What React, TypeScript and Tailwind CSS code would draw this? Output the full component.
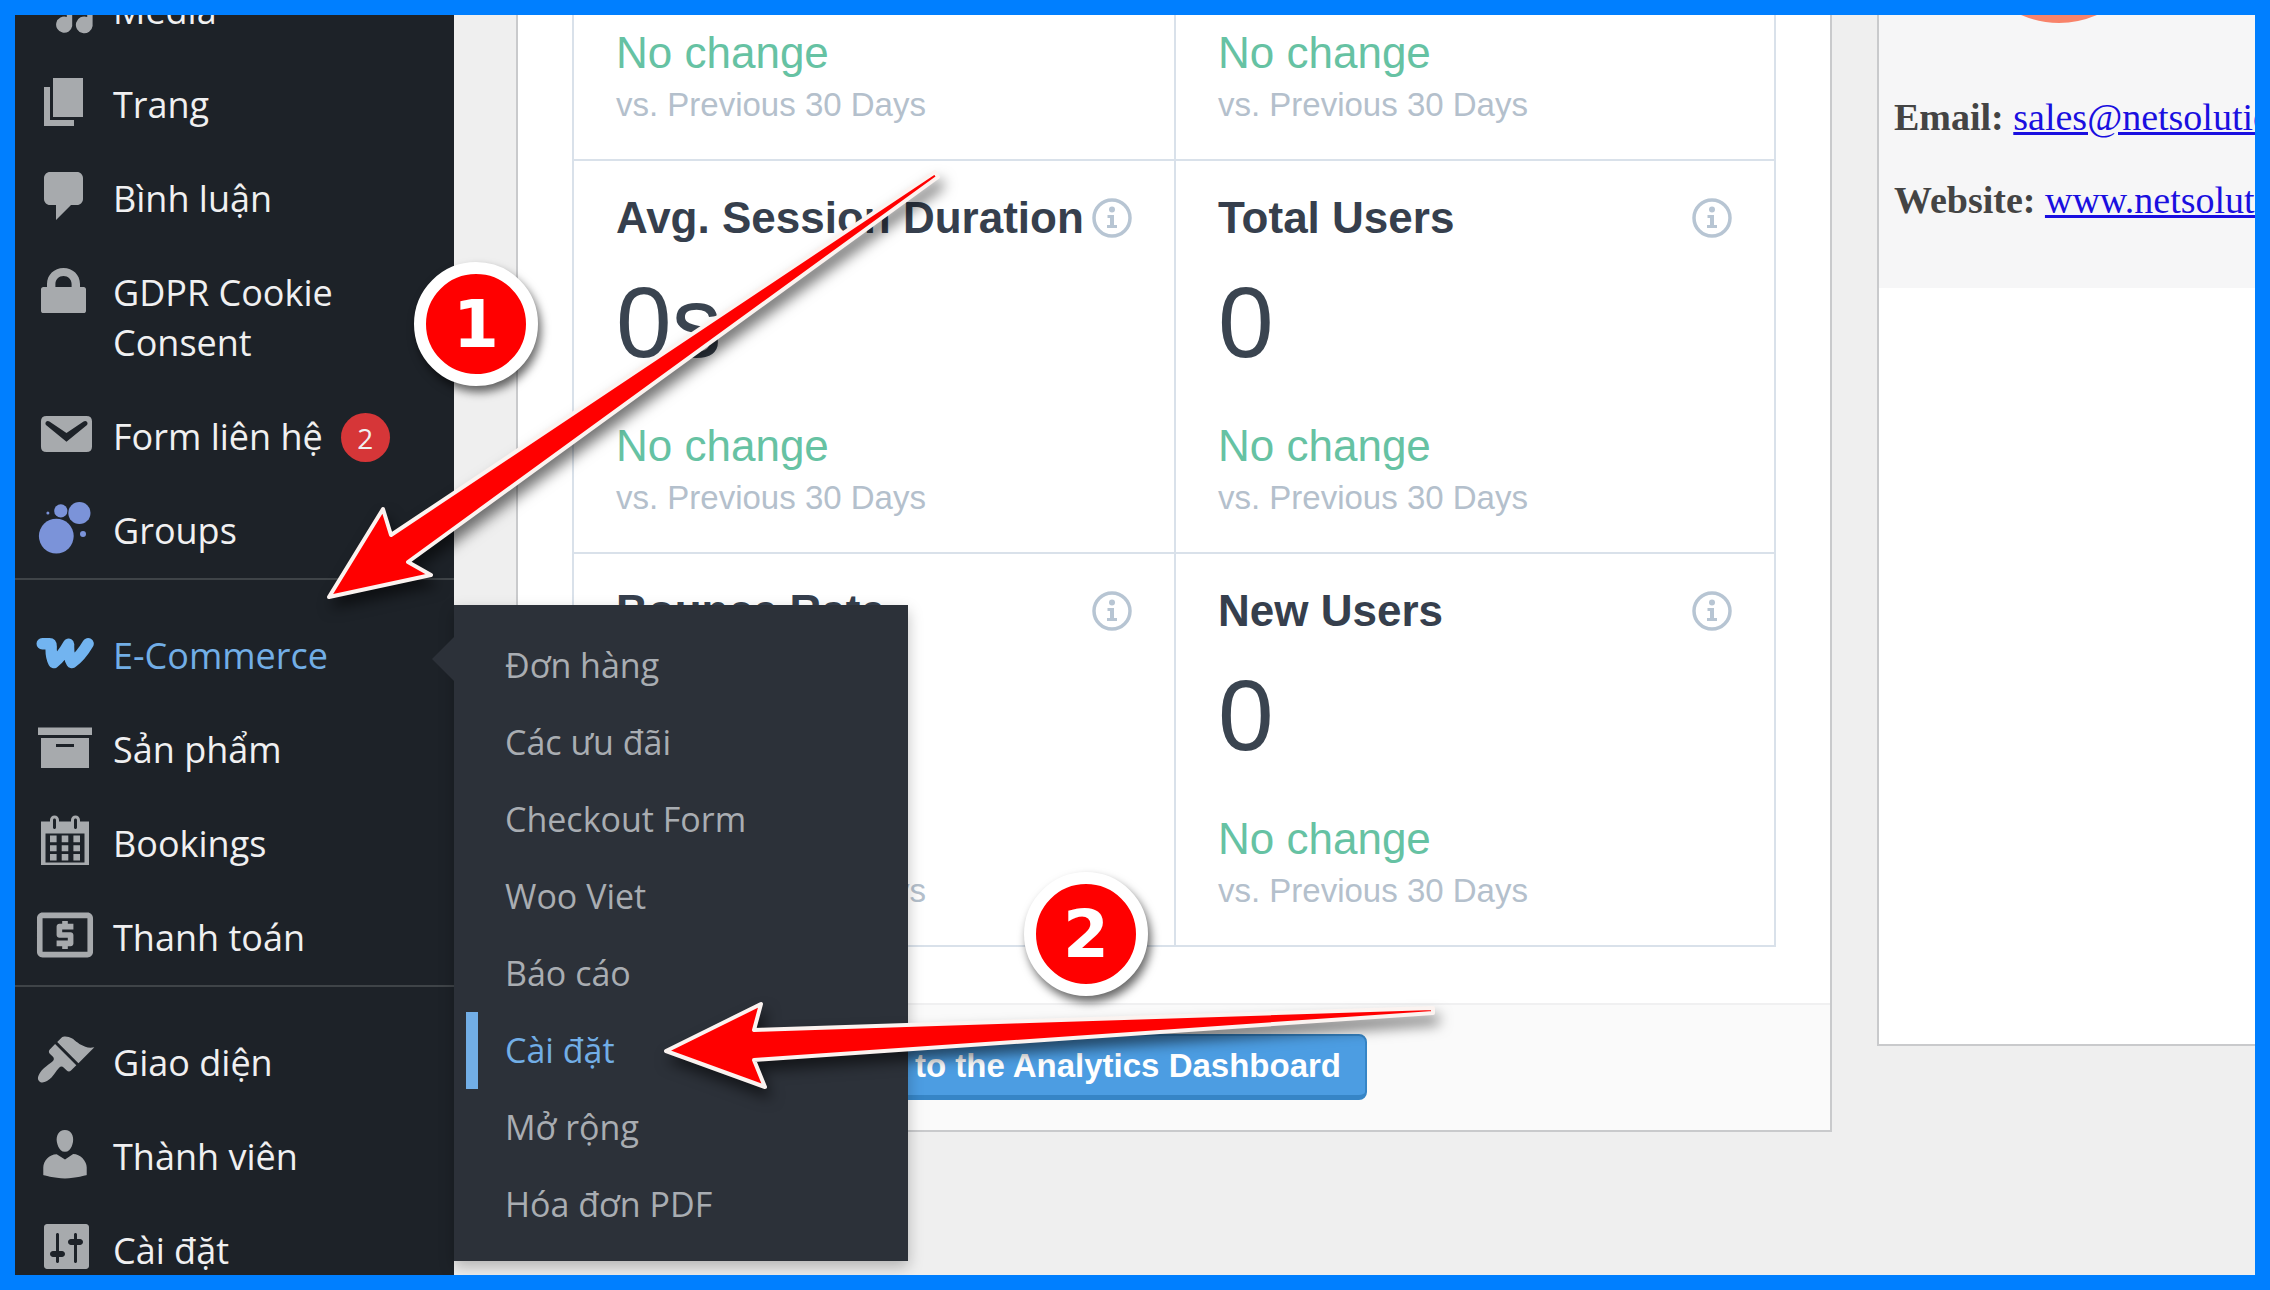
import { Fragment, type ReactNode } from 'react';

interface MenuEntry {
  label: string;
  icon: ReactNode;
  viewBox?: string;
  count?: number;
  submenu?: string[];
  separated?: boolean;
}

interface Metric {
  title: string;
  value: string;
}

const MENU: MenuEntry[] = [
  {
    label: 'Media',
    icon: <path d="M10.6 13V3h8.6v13a2.8 2.8 0 1 1-1.8-3V8h-5v8a2.7 2.7 0 1 1-1.8-3z" />,
  },
  { label: 'Trang', icon: <path d="M6 15V2h10v13H6zm-1 1h8v2H3V5h2v11z" /> },
  {
    label: 'Bình luận',
    icon: <path d="M5 2h9c1.1 0 2 .9 2 2v7c0 1.1-.9 2-2 2h-2l-5 5v-5H5c-1.1 0-2-.9-2-2V4c0-1.1.9-2 2-2z" />,
  },
  {
    label: 'GDPR Cookie Consent',
    icon: (
      <path d="M15 9h1.2c.5 0 .8.3.8.8v7.1c0 .5-.3.8-.8.8H2.8c-.5 0-.8-.3-.8-.8V9.8c0-.5.3-.8.8-.8H4V8c0-3 2.4-5.3 5.5-5.3S15 5 15 8v1zm-2.8 0V8c0-1.6-1.2-2.7-2.7-2.7S6.8 6.4 6.8 8v1h5.4z" />
    ),
  },
  {
    label: 'Form liên hệ',
    count: 2,
    icon: (
      <path d="M3.87 4h13.25C18.37 4 19 4.59 19 5.79v8.42c0 1.19-.63 1.79-1.88 1.79H3.87c-1.25 0-1.88-.6-1.88-1.79V5.79c0-1.2.63-1.79 1.88-1.79zm6.62 8.6l6.74-5.53c.24-.2.43-.66.13-1.07-.29-.41-.82-.42-1.17-.17l-5.7 3.86L4.8 5.83c-.35-.25-.88-.24-1.17.17-.3.41-.11.87.13 1.07z" />
    ),
  },
  {
    label: 'Groups',
    icon: (
      <g fill="#7b93d9">
        <circle cx="7.1" cy="12.7" r="5.8" />
        <circle cx="14.8" cy="5" r="3.7" />
        <circle cx="8.6" cy="4.3" r="2.2" />
        <circle cx="16" cy="12" r="1" />
        <circle cx="4.3" cy="5" r=".5" />
      </g>
    ),
  },
  {
    label: 'E-Commerce',
    separated: true,
    submenu: ['Đơn hàng', 'Các ưu đãi', 'Checkout Form', 'Woo Viet', 'Báo cáo', 'Cài đặt', 'Mở rộng', 'Hóa đơn PDF'],
    icon: (
      <path
        d="M2.4 6.9h2.4c.6 0 .6.4.6 1-.1 1.9 0 3.600.9 5.300 1.900-1.500 3.500-3.600 4.900-6.100-.1 2.400.1 4.400 1.100 6.100 2.200-1.500 4-3.900 5.400-6.300"
        fill="none"
        stroke="currentColor"
        strokeWidth="3.8"
        strokeLinecap="round"
        strokeLinejoin="round"
      />
    ),
  },
  { label: 'Sản phẩm', icon: <path d="M19 3.5V6H1V3.5h18zM2 7h16v10H2V7zm11 3V9H7v1h6z" /> },
  {
    label: 'Bookings',
    icon: (
      <path
        fillRule="evenodd"
        d="M15 3.5h3V18H2V3.5h3V3c0-.83.67-1.5 1.5-1.5S8 2.17 8 3v.5h4V3c0-.83.67-1.5 1.5-1.5S15 2.17 15 3v.5zM6 3v2.5c0 .28.22.5.5.5s.5-.22.5-.5V3c0-.28-.22-.5-.5-.5S6 2.72 6 3zm7 0v2.5c0 .28.22.5.5.5s.5-.22.5-.5V3c0-.28-.22-.5-.5-.5s-.5.22-.5.5zM3.5 7.5v9.7h13V7.5h-13zM5 8.2h2.2v2.2H5zm3.9 0h2.2v2.2H8.9zm3.9 0H15v2.2h-2.2zM5 11.4h2.2v2H5zm3.9 0h2.2v2H8.9zm3.9 0H15v2h-2.2zM5 14.3h2.2v2.2H5zm3.9 0h2.2v2.2H8.9zm3.9 0H15v2.2h-2.2z"
      />
    ),
  },
  {
    label: 'Thanh toán',
    viewBox: '1.3 1.3 21.4 21.4',
    icon: (
      <path d="M11 17h2v-1h1c.55 0 1-.45 1-1v-3c0-.55-.45-1-1-1h-3v-1h4V8h-2V7h-2v1h-1c-.55 0-1 .45-1 1v3c0 .55.45 1 1 1h3v1H9v2h2v1zm9-13H4c-1.11 0-1.99.89-1.99 2L2 18c0 1.11.89 2 2 2h16c1.11 0 2-.89 2-2V6c0-1.11-.89-2-2-2zm0 14H4V6h16v12z" />
    ),
  },
  {
    label: 'Giao diện',
    separated: true,
    icon: (
      <path d="M14.48 11.06L7.41 3.99l1.5-1.5c.5-.56 2.3-.47 3.51.32 1.21.8 1.43 1.28 2.91 2.1 1.18.64 2.45 1.26 4.45.85zm-.71.71L6.7 4.7 4.93 6.47c-.39.39-.39 1.02 0 1.41l1.06 1.06c.39.39.39 1.03 0 1.42-.6.6-1.43 1.11-2.21 1.69-.35.26-.7.53-1.01.84C1.43 14.23.4 16.08 1.4 17.07c.99 1 2.84-.03 4.18-1.36.31-.31.58-.66.85-1.02.57-.78 1.08-1.61 1.69-2.21.39-.39 1.02-.39 1.41 0l1.06 1.06c.39.39 1.02.39 1.41 0z" />
    ),
  },
  {
    label: 'Thành viên',
    icon: (
      <path d="M10 9.25c-2.27 0-2.73-3.44-2.73-3.44C7 4.02 7.82 2 9.97 2c2.16 0 2.98 2.02 2.71 3.81 0 0-.41 3.44-2.68 3.44zm0 2.57L12.72 10c2.39 0 4.52 2.33 4.52 4.53v2.49s-3.65 1.13-7.24 1.13c-3.65 0-7.24-1.13-7.24-1.13v-2.49c0-2.25 1.94-4.48 4.47-4.48z" />
    ),
  },
  {
    label: 'Cài đặt',
    icon: (
      <path d="M18 16V3c0-.55-.45-1-1-1H4c-.55 0-1 .45-1 1v13c0 .55.45 1 1 1h13c.55 0 1-.45 1-1zM8 11h1c.55 0 1 .45 1 1s-.45 1-1 1H8v1.5c0 .28-.22.5-.5.5s-.5-.22-.5-.5V13H6c-.55 0-1-.45-1-1s.45-1 1-1h1V5.5c0-.28.22-.5.5-.5s.5.22.5.5V11zm5-2h-1c-.55 0-1-.45-1-1s.45-1 1-1h1V5.5c0-.28.22-.5.5-.5s.5.22.5.5V7h1c.55 0 1 .45 1 1s-.45 1-1 1h-1v5.5c0 .28-.22.5-.5.5s-.5-.22-.5-.5V9z" />
    ),
  },
];

const METRIC_ROWS: Metric[][] = [
  [
    { title: 'Avg. Session Duration', value: '0s' },
    { title: 'Total Users', value: '0' },
  ],
  [
    { title: 'Bounce Rate', value: '0%' },
    { title: 'New Users', value: '0' },
  ],
];

export default function App() {
  return (
    <div className="relative flex h-screen overflow-hidden border-[15px] border-[#007fff] bg-[#efefef]">
      <Sidebar />
      <main className="flex min-w-0 flex-1 items-start gap-[45px] pl-[62px]">
        <AnalyticsCard />
        <ContactCard />
      </main>
      <Annotations />
    </div>
  );
}

function Sidebar() {
  return (
    <aside className="relative z-10 w-[439px] shrink-0 bg-[#1d2228] font-['Open_Sans','Noto_Sans',sans-serif] text-[36px] text-[#f0f0f1]">
      <nav className="-mt-[51px]">
        <ul>
          {MENU.map((entry) => (
            <Fragment key={entry.label}>
              {entry.separated && <li aria-hidden="true" className="mb-[29px] h-[2px] bg-[#3f4448]" />}
              <MenuItem entry={entry} />
            </Fragment>
          ))}
        </ul>
      </nav>
    </aside>
  );
}

function MenuItem({ entry }: { entry: MenuEntry }) {
  const open = Boolean(entry.submenu);

  return (
    <li className="relative">
      <a href="#" className={`flex items-start gap-[18px] pr-5 pl-5 ${open ? 'text-[#72aee6]' : ''}`}>
        <svg
          viewBox={entry.viewBox ?? '0 0 20 20'}
          fill="currentColor"
          aria-hidden="true"
          className={`mt-[14px] size-[60px] shrink-0 ${open ? 'text-[#72b4f0]' : 'text-[#a7aaad]'}`}
        >
          {entry.icon}
        </svg>
        <span className="py-[22px] leading-[50px]">{entry.label}</span>
        {entry.count && (
          <span className="mt-[23px] flex size-[49px] shrink-0 items-center justify-center rounded-full bg-[#d63638] text-[28px]">
            {entry.count}
          </span>
        )}
      </a>
      {entry.submenu && <Submenu items={entry.submenu} current="Cài đặt" />}
    </li>
  );
}

function Submenu({ items, current }: { items: string[]; current: string }) {
  return (
    <div className="absolute -top-[4px] left-full w-[454px] bg-[#2c3139] pt-[22px] pb-[18px] text-[34px] shadow-[0_6px_14px_rgba(0,0,0,0.25)]">
      <svg viewBox="0 0 22 44" aria-hidden="true" className="absolute top-8 right-full h-11 w-[22px] fill-[#2c3139]">
        <path d="M22 0v44L0 22z" />
      </svg>
      <ul>
        {items.map((item) => (
          <li key={item} className="pl-3">
            <a
              href="#"
              className={`block border-l-[12px] pl-[27px] leading-[77px] ${
                item === current ? 'border-[#72aee6] text-[#72aee6]' : 'border-transparent text-[#a9adb2]'
              }`}
            >
              {item}
            </a>
          </li>
        ))}
      </ul>
    </div>
  );
}

function AnalyticsCard() {
  return (
    <section className="min-w-0 flex-1 border-x-2 border-b-2 border-[#c9cacc] bg-white font-['Liberation_Sans',Arial,sans-serif]">
      <div className="mx-[54px] mb-[56px] border-x-2 border-b-2 border-[#d9e1ea]">
        <div className="grid grid-cols-2 *:even:border-l-2 *:even:border-[#d9e1ea]">
          <div className="px-[42px] pt-[11px] pb-[29px]">
            <Delta />
          </div>
          <div className="px-[42px] pt-[11px] pb-[29px]">
            <Delta />
          </div>
        </div>
        {METRIC_ROWS.map((row) => (
          <div
            key={row[0].title}
            className="grid grid-cols-2 border-t-2 border-[#d9e1ea] *:even:border-l-2 *:even:border-[#d9e1ea]"
          >
            {row.map((metric) => (
              <MetricCell key={metric.title} metric={metric} />
            ))}
          </div>
        ))}
      </div>
      <footer className="flex justify-end border-t-2 border-[#f0f0f1] bg-[#fafafa] pt-[29px] pr-[463px] pb-[30px]">
        <button
          type="button"
          className="rounded-lg border-2 border-b-[5px] border-[#3685c6] bg-[#4c9de2] px-6 text-[33px] leading-[59px] font-bold whitespace-nowrap text-white"
        >
          Go to the Analytics Dashboard
        </button>
      </footer>
    </section>
  );
}

function MetricCell({ metric }: { metric: Metric }) {
  return (
    <div className="px-[42px] pt-[31px] pb-[29px]">
      <div className="flex items-center justify-between leading-[52px]">
        <h3 className="text-[44px] font-bold whitespace-nowrap text-[#363f4d]">{metric.title}</h3>
        <InfoIcon />
      </div>
      <p className="mt-[27px] mb-[46px] text-[100px] leading-[102px] text-[#3a4450]">{metric.value}</p>
      <Delta />
    </div>
  );
}

function Delta() {
  return (
    <>
      <p className="text-[44px] leading-[54px] text-[#66c2a3]">No change</p>
      <p className="text-[33px] leading-[50px] text-[#b4c0cc]">vs. Previous 30 Days</p>
    </>
  );
}

function InfoIcon() {
  return (
    <svg viewBox="0 0 40 40" aria-hidden="true" className="size-10 shrink-0 text-[#b7c5d3]">
      <circle cx="20" cy="20" r="18" fill="none" stroke="currentColor" strokeWidth="3.5" />
      <circle cx="20" cy="11.5" r="3" fill="currentColor" />
      <path d="M15.5 17H22v10h3v3H15v-3h3v-7h-2.5z" fill="currentColor" />
    </svg>
  );
}

function ContactCard() {
  return (
    <section className="w-[378px] shrink-0 overflow-hidden border-b-2 border-l-2 border-[#c9cacc] bg-white font-['Liberation_Serif','Times_New_Roman',serif] text-[38px] whitespace-nowrap text-[#444]">
      <div className="h-[273px] bg-[#f6f6f7]">
        <svg viewBox="0 0 76 8" aria-hidden="true" className="ml-[142px] h-2 w-[76px] fill-[#f8836a]">
          <path d="M0 0q38 16 76 0z" />
        </svg>
        <p className="mt-[73px] ml-[15px] leading-[43px]">
          <strong>Email:</strong>{' '}
          <a href="mailto:sales@netsolutions.vn" className="text-[#1a0fe0] underline">
            sales@netsolutions.vn
          </a>
        </p>
        <p className="mt-[40px] ml-[15px] leading-[43px]">
          <strong>Website:</strong>{' '}
          <a href="#" className="text-[#1a0fe0] underline">
            www.netsolutions.vn
          </a>
        </p>
      </div>
      <div className="h-[756px]" />
    </section>
  );
}

function Annotations() {
  return (
    <div className="pointer-events-none absolute inset-0 z-20">
      <svg
        viewBox="0 0 2240 1260"
        aria-hidden="true"
        className="absolute top-0 left-0 h-[1260px] w-[2240px] drop-shadow-[4px_9px_7px_rgba(0,0,0,0.55)]"
      >
        <g fill="#ff0000" stroke="#fbf3f0" strokeWidth="4" strokeLinejoin="round">
          <path d="M314 582 368 494l8 26L920 157l3 5L393 547l23 13z" />
          <path d="M651 1036 746 989l-7 26L1418 993v5L739 1045l11 27z" />
        </g>
      </svg>
      <StepBadge step={1} className="top-[247px] left-[399px]" />
      <StepBadge step={2} className="top-[857px] left-[1009px]" />
    </div>
  );
}

function StepBadge({ step, className }: { step: number; className: string }) {
  return (
    <span
      className={`absolute flex size-[124px] items-center justify-center rounded-full border-[12px] border-white bg-[#ff0000] font-['DejaVu_Sans',Verdana,sans-serif] text-[66px] font-bold text-white shadow-[3px_6px_10px_rgba(0,0,0,0.6)] ${className}`}
    >
      {step}
    </span>
  );
}
